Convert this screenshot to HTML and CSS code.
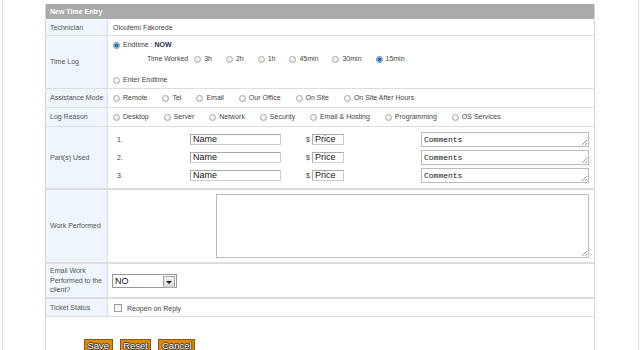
FILE: index.html
```html
<!DOCTYPE html>
<html lang="en">
<head>
  <meta charset="UTF-8" />
  <title>New Time Entry</title>
  <link rel="stylesheet" href="styles.css">
</head>
<body>
  <div class="page">
    <table class="entry">
      <colgroup><col class="c-lbl"><col></colgroup>
      <tr class="head">
        <th colspan="2">New Time Entry</th>
      </tr>
      <tr class="r-tech">
        <td class="lbl">Technician</td>
        <td class="val">Oloufemi Fakorede</td>
      </tr>
      <tr class="r-time">
        <td class="lbl">Time Log</td>
        <td class="val">
          <div class="line"><span class="rad on"></span>Endtime : <b>NOW</b></div>
          <div class="line worked">
            <span class="tw">Time Worked</span>
            <span class="opt w"><span class="rad"></span>3h</span>
            <span class="opt w"><span class="rad"></span>2h</span>
            <span class="opt w"><span class="rad"></span>1h</span>
            <span class="opt w"><span class="rad"></span>45min</span>
            <span class="opt w"><span class="rad"></span>30min</span>
            <span class="opt w"><span class="rad on"></span>15min</span>
          </div>
          <div class="line enter"><span class="rad"></span>Enter Endtime</div>
        </td>
      </tr>
      <tr class="r-opt">
        <td class="lbl">Assistance Mode</td>
        <td class="val">
          <span class="opt"><span class="rad"></span>Remote</span>
          <span class="opt"><span class="rad"></span>Tel</span>
          <span class="opt"><span class="rad"></span>Email</span>
          <span class="opt"><span class="rad"></span>Our Office</span>
          <span class="opt"><span class="rad"></span>On Site</span>
          <span class="opt"><span class="rad"></span>On Site After Hours</span>
        </td>
      </tr>
      <tr class="r-opt">
        <td class="lbl">Log Reason</td>
        <td class="val">
          <span class="opt"><span class="rad"></span>Desktop</span>
          <span class="opt"><span class="rad"></span>Server</span>
          <span class="opt"><span class="rad"></span>Network</span>
          <span class="opt"><span class="rad"></span>Security</span>
          <span class="opt"><span class="rad"></span>Email &amp; Hosting</span>
          <span class="opt"><span class="rad"></span>Programming</span>
          <span class="opt"><span class="rad"></span>OS Services</span>
        </td>
      </tr>
      <tr class="r-parts">
        <td class="lbl">Part(s) Used</td>
        <td class="val">
          <div class="part">
            <span class="num">1.</span>
            <span class="box name">Name</span>
            <span class="cur">$</span><span class="box price">Price</span>
            <span class="box comm">Comments<i class="grip"></i></span>
          </div>
          <div class="part">
            <span class="num">2.</span>
            <span class="box name">Name</span>
            <span class="cur">$</span><span class="box price">Price</span>
            <span class="box comm">Comments<i class="grip"></i></span>
          </div>
          <div class="part">
            <span class="num">3.</span>
            <span class="box name">Name</span>
            <span class="cur">$</span><span class="box price">Price</span>
            <span class="box comm">Comments<i class="grip"></i></span>
          </div>
        </td>
      </tr>
      <tr class="r-work">
        <td class="lbl">Work Performed</td>
        <td class="val"><div class="work"><i class="grip"></i></div></td>
      </tr>
      <tr class="r-email">
        <td class="lbl">Email Work Performed to the client?</td>
        <td class="val">
          <div class="select">NO<span class="arrow"></span></div>
        </td>
      </tr>
      <tr class="r-ticket">
        <td class="lbl">Ticket Status</td>
        <td class="val"><span class="check"></span>Reopen on Reply</td>
      </tr>
      <tr class="r-btn">
        <td colspan="2">
          <div class="buttons">
            <span class="btn">Save</span>
            <span class="btn">Reset</span>
            <span class="btn">Cancel</span>
          </div>
        </td>
      </tr>
    </table>
  </div>
</body>
</html>
```

FILE: styles.css
```css
body {
  margin: 0;
  font-family: "Liberation Sans", Arial, sans-serif;
  font-size: 7px;
  color: #444;
  background: #fff;
  overflow: hidden;
}

.page {
  margin-left: 2px;
  width: 637px;
  height: 350px;
  border-left: 1px solid #ddd;
  border-right: 1px solid #ddd;
  padding-top: 4px;
  box-sizing: border-box;
}

.entry {
  margin-left: 42px;
  width: 550px;
  table-layout: fixed;
  border-collapse: collapse;
  border-left: 1px solid #d4d4d4;
  border-right: 1px solid #d4d4d4;
}

.c-lbl {
  width: 62px;
}

.entry td, .entry th {
  padding: 0;
  border-bottom: 1px solid #ddd;
  vertical-align: middle;
}

.head th {
  background: #aaa;
  color: #fff;
  font-weight: bold;
  text-align: left;
  padding-left: 4px;
  height: 15px;
  border-bottom: 1px solid #fff;
}

.lbl {
  padding-left: 4px !important;
  background: #eef5fc;
  border-right: 1px solid #ddd;
  color: #555;
  line-height: 9.5px;
}

.val {
  padding-left: 5px !important;
}

.r-tech td { height: 15px; }
.r-time td { height: 52px; }
.r-opt td { height: 18px; }
.r-parts td { height: 61px; border-bottom-width: 2px; }
.r-work td { height: 72px; border-bottom-width: 2px; }
.r-email td { height: 33px; border-bottom-width: 2px; }
.r-ticket td { height: 17px; }
.r-btn td { height: 40px; border-bottom: 0; vertical-align: top; }

.rad {
  display: inline-block;
  width: 7px;
  height: 7px;
  border: 1px solid #a8a8a8;
  border-radius: 50%;
  background: radial-gradient(circle at 40% 35%, #fff, #ddd);
  vertical-align: -2px;
  margin-right: 3px;
  box-sizing: border-box;
}

.rad.on {
  border-color: #6b8fb0;
  background: radial-gradient(circle, #1e5f9a 0, #2a70ad 1.5px, #cfe0ee 2.5px, #f4f8fb 100%);
}

.line {
  height: 10px;
  line-height: 10px;
}

.line b {
  color: #1a2f5a;
}

.worked {
  margin-top: 4px;
  padding-left: 34px;
}

.tw {
  margin-right: 4px;
}

.enter {
  margin-top: 11px;
}

.opt {
  margin-right: 13px;
}

.opt.w {
  margin-right: 12px;
}

.part {
  display: flex;
  align-items: center;
  height: 18px;
}

.num {
  width: 73px;
  padding-left: 4px;
}

.box {
  display: inline-block;
  box-sizing: border-box;
  border: 1px solid #aaa;
  border-right-color: #ccc;
  border-bottom-color: #ccc;
  background: #fff;
  color: #111;
  font-size: 9px;
  line-height: 9px;
  padding-left: 2px;
}

.name {
  width: 91px;
  height: 11px;
}

.cur {
  margin-left: 25px;
  width: 6px;
}

.price {
  width: 32px;
  height: 11px;
}

.comm {
  position: relative;
  margin-left: 77px;
  width: 168px;
  height: 15px;
  font-family: "Liberation Mono", "Courier New", monospace;
  font-size: 8px;
  line-height: 13px;
  border-color: #bbb;
}

.grip {
  position: absolute;
  right: 1px;
  bottom: 1px;
  width: 5px;
  height: 5px;
  background: linear-gradient(135deg, transparent 45%, #999 45%, #999 55%, transparent 55%, transparent 75%, #999 75%, #999 85%, transparent 85%);
}

.work {
  position: relative;
  margin-left: 103px;
  width: 373px;
  height: 64px;
  box-sizing: border-box;
  border: 1px solid #bbb;
  background: #fff;
}

.select {
  position: relative;
  width: 65px;
  height: 14px;
  box-sizing: border-box;
  border: 1px solid #999;
  background: #fff;
  color: #111;
  font-size: 9px;
  line-height: 12px;
  padding-left: 2px;
  margin-left: -1px;
}

.arrow {
  position: absolute;
  right: 1px;
  top: 1px;
  width: 10px;
  height: 10px;
  border: 1px solid #aaa;
  background: linear-gradient(#f2f2f2, #d8d8d8);
}

.arrow::after {
  content: "";
  position: absolute;
  left: 2px;
  top: 4px;
  border-left: 3px solid transparent;
  border-right: 3px solid transparent;
  border-top: 3px solid #222;
}

.check {
  display: inline-block;
  width: 8px;
  height: 8px;
  box-sizing: border-box;
  border: 1px solid #999;
  background: linear-gradient(#eee, #fff);
  margin-left: 1px;
  margin-right: 5px;
  vertical-align: -1px;
}

.buttons {
  display: flex;
  gap: 7px;
  padding-top: 22px;
  padding-left: 38px;
}

.btn {
  display: inline-block;
  background: #dd8a0a;
  border: 1px solid #8a5a10;
  color: #fff;
  font-size: 9.5px;
  line-height: 12px;
  padding: 0 2.5px;
  text-shadow: -1px 0 #333, 1px 0 #333, 0 -1px #333, 0 1px #333;
}
```
